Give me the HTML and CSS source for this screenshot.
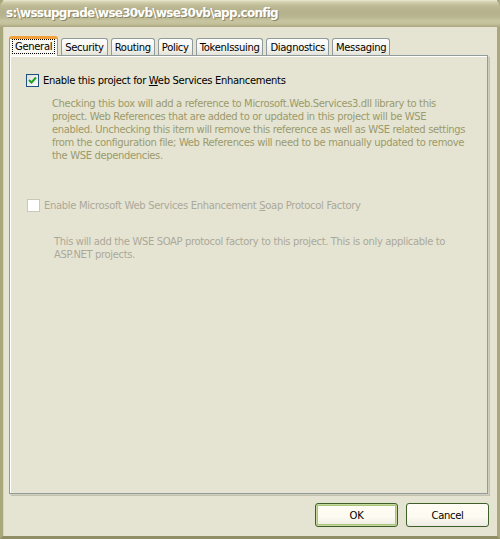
FILE: index.html
```html
<!DOCTYPE html>
<html>
<head>
<meta charset="utf-8">
<link rel="stylesheet" href="styles.css">
</head>
<body>
<div class="window">
  <div class="titlebar"><span class="title">s:\wssupgrade\wse30vb\wse30vb\app.config</span></div>
  <div class="client">
    <div class="tabs">
      <div class="tab active"><span class="focus">General</span></div>
      <div class="tab">Security</div>
      <div class="tab">Routing</div>
      <div class="tab">Policy</div>
      <div class="tab">TokenIssuing</div>
      <div class="tab">Diagnostics</div>
      <div class="tab">Messaging</div>
    </div>
    <div class="panel">
      <div class="option">
        <span class="check checked"><svg width="9" height="9" viewBox="0 0 9 9"><path d="M1 4 L3.5 6.5 L8 1.5" fill="none" stroke="#21a121" stroke-width="2"/></svg></span>
        <span class="label">Enable this project for <u>W</u>eb Services Enhancements</span>
      </div>
      <p class="desc desc1">Checking this box will add a reference to Microsoft.Web.Services3.dll library to this project. Web References that are added to or updated in this project will be WSE enabled. Unchecking this item will remove this reference as well as WSE related settings from the configuration file; Web References will need to be manually updated to remove the WSE dependencies.</p>
      <div class="option disabled">
        <span class="check"></span>
        <span class="label">Enable Microsoft Web Services Enhancement <u>S</u>oap Protocol Factory</span>
      </div>
      <p class="desc desc2">This will add the WSE SOAP protocol factory to this project. This is only applicable to ASP.NET projects.</p>
    </div>
    <div class="buttons">
      <button class="btn default">OK</button>
      <button class="btn">Cancel</button>
    </div>
  </div>
</div>
</body>
</html>
```

FILE: styles.css
```css
html, body {
  margin: 0;
  padding: 0;
  background: #e5e4d3;
}
.window {
  width: 500px;
  height: 539px;
  box-sizing: border-box;
  display: flex;
  flex-direction: column;
  background: #e5e4d3;
  border-left: 3px solid #a9a87c;
  border-right: 3px solid #a9a87c;
  border-bottom: 3px solid #8f8e64;
  box-shadow: inset 1px 0 0 #d8d7b8;
  font-family: "DejaVu Sans", "Liberation Sans", sans-serif;
  font-size: 10px;
}
.titlebar {
  height: 27px;
  margin: 0 -3px;
  box-sizing: border-box;
  padding: 6px 0 0 6px;
  border-radius: 7px 7px 0 0;
  background: linear-gradient(#ebe9cf 0, #d2d0ae 2px, #bcb994 6px, #b5b18d 12px, #b8b590 17px, #c8c6a2 21px, #c2bf9a 24px, #a9a67f 27px);
}
.title {
  font-family: "DejaVu Sans", "Liberation Sans", sans-serif;
  font-weight: bold;
  font-size: 12px;
  color: #ffffff;
  letter-spacing: -0.75px;
  text-shadow: 1px 1px 0 #8a8766;
}
.client {
  flex: 1;
  display: flex;
  flex-direction: column;
  padding: 9px 7px 9px 6px;
}
.tabs {
  display: flex;
  align-items: flex-end;
  gap: 3px;
  padding-left: 1px;
  height: 19px;
  position: relative;
  z-index: 1;
}
.tab {
  height: 17px;
  box-sizing: border-box;
  padding: 2px 3px 0 3px;
  border: 1px solid #919b9c;
  border-bottom: none;
  border-radius: 3px 3px 0 0;
  background: linear-gradient(#ffffff, #f1f0ea 70%, #e3e2d8);
  color: #000;
  white-space: nowrap;
  font-size: 10px;
  letter-spacing: -0.32px;
  line-height: 13px;
  text-align: center;
}
.tab.active {
  height: 20px;
  margin-bottom: -1px;
  border-top: 3px solid #f0a13c;
  background: #f8f7f1;
  padding: 0 2px;
  margin-left: -1px;
}
.focus {
  display: inline-block;
  padding: 0 2px;
  border: 1px dotted #000;
  line-height: 13px;
}
.panel {
  flex: 1;
  border: 1px solid #919b9c;
  box-shadow: inset 1px 1px 0 #ffffff, 1px 1px 0 #d0cfbf, 2px 2px 0 #c2c1ae;
  background: #e5e4d3;
  padding: 18px 0 0 16px;
  margin-right: 2px;
}
.option {
  display: flex;
  align-items: center;
  gap: 4px;
  height: 13px;
}
.check {
  width: 11px;
  height: 11px;
  border: 1px solid #1c5180;
  background: linear-gradient(135deg, #dcdcd7, #ffffff);
  display: flex;
  align-items: center;
  justify-content: center;
  flex: none;
}
.label {
  font-size: 10px;
  letter-spacing: -0.32px;
  color: #000;
  white-space: nowrap;
}
.disabled .check {
  border-color: #cac8bb;
  background: #ffffff;
}
.disabled .label {
  color: #aca899;
}
.desc {
  font-size: 10px;
  letter-spacing: -0.36px;
  line-height: 13px;
  margin: 0;
}
.desc1 {
  color: #9b9a6a;
  margin: 10px 18px 0 26px;
}
.desc2 {
  color: #aca899;
  margin: 23px 18px 0 28px;
}
.disabled {
  margin-top: 37px;
  margin-left: 1px;
}
.buttons {
  display: flex;
  justify-content: flex-end;
  gap: 8px;
  padding-top: 9px;
  padding-right: 1px;
}
.btn {
  width: 83px;
  height: 24px;
  border: 1px solid #3d5f2a;
  border-radius: 3px;
  background: linear-gradient(#fffdf5, #fdfaf0 60%, #ecebe3);
  font-family: "DejaVu Sans", sans-serif;
  font-size: 10px;
  letter-spacing: -0.3px;
  color: #000;
  padding: 0;
}
.btn.default {
  box-shadow: inset 0 0 0 1px #c5d99c, inset 0 0 0 2px #a9c47b;
}
```
